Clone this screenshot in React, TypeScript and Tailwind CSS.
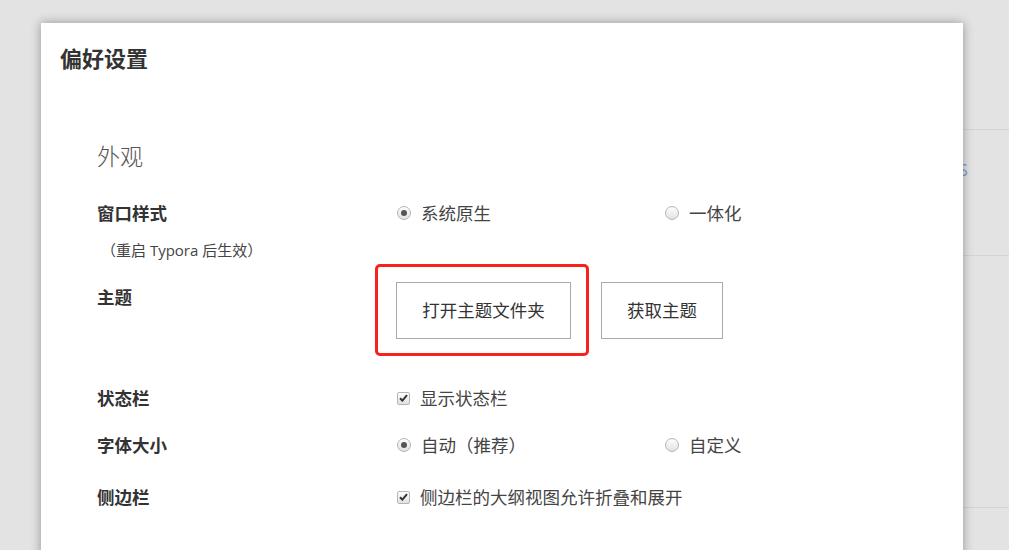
const font = { fontFamily: '"Open Sans", "Noto Sans CJK SC", sans-serif' };

const Radio = ({ checked }: { checked?: boolean }) => (
  <span className="w-[14px] h-[14px] rounded-full border border-[#b5b5b5] bg-gradient-to-b from-[#fdfdfd] to-[#e2e2e2] flex items-center justify-center shrink-0">
    {checked && <span className="w-[6px] h-[6px] rounded-full bg-[#555]" />}
  </span>
);

const Check = () => (
  <span className="w-[13px] h-[13px] rounded-[2px] border border-[#b5b5b5] bg-gradient-to-b from-[#fdfdfd] to-[#e2e2e2] flex items-center justify-center shrink-0">
    <svg width="9" height="8" viewBox="0 0 9 8">
      <path d="M1 4.2 L3.4 6.6 L8 1.2" fill="none" stroke="#333" strokeWidth="2" />
    </svg>
  </span>
);

const Option = ({ type, checked, label, w }: { type: 'radio' | 'check'; checked?: boolean; label: string; w?: string }) => (
  <label className={`flex items-center gap-[10px] ${w ?? ''}`}>
    {type === 'radio' ? <Radio checked={checked} /> : <Check />}
    <span className="text-[#444] text-[17.5px] leading-[24px]">{label}</span>
  </label>
);

const Label = ({ children }: { children: string }) => (
  <div className="w-[300px] shrink-0 text-[#333] font-bold text-[17.5px] leading-[24px]">{children}</div>
);

export default function App() {
  return (
    <div className="relative w-[1009px] h-[550px] bg-[#e3e3e3] overflow-hidden" style={font}>
      {/* background app peeking on the right */}
      <div className="absolute left-[963px] right-0 top-[129px] h-px bg-[#d4d4d4]" />
      <div className="absolute left-[963px] right-0 top-[255px] h-px bg-[#d4d4d4]" />
      <div className="absolute left-[963px] right-0 top-[507px] h-px bg-[#d4d4d4]" />
      <div className="absolute left-[959px] top-[158px] text-[16px] text-[#7b9cc4]">S</div>

      <div className="relative ml-[41px] mt-[23px] w-[922px] h-[600px] bg-white shadow-[0_0_10px_rgba(0,0,0,0.35)]">
        <div className="pl-[19px] pt-[20px] text-[22px] leading-[30px] font-bold text-[#333]">偏好设置</div>

        <div className="pl-[56px]">
          <div className="mt-[67px] text-[23px] leading-[32px] text-[#555] font-light">外观</div>

          <div className="mt-[29px] flex items-center">
            <Label>窗口样式</Label>
            <Option type="radio" checked label="系统原生" w="w-[268px]" />
            <Option type="radio" label="一体化" />
          </div>
          <div className="mt-[14px] pl-[4px] text-[15px] leading-[22px] text-[#444]">（重启 Typora 后生效）</div>

          <div className="mt-[21px] flex items-start">
            <div className="mt-[3px]">
              <Label>主题</Label>
            </div>
            <div className="relative -ml-px">
              <button className="w-[175px] h-[57px] border border-[#aaa] text-[#333] text-[17.5px] bg-white">打开主题文件夹</button>
              <div className="absolute left-[-21px] top-[-18px] w-[214px] h-[92px] border-[3px] border-[#f5231b] rounded-[5px]" />
            </div>
            <button className="ml-[30px] w-[122px] h-[57px] border border-[#aaa] text-[#333] text-[17.5px] bg-white">获取主题</button>
          </div>

          <div className="mt-[47px] flex items-center">
            <Label>状态栏</Label>
            <Option type="check" label="显示状态栏" />
          </div>

          <div className="mt-[23px] flex items-center">
            <Label>字体大小</Label>
            <Option type="radio" checked label="自动（推荐）" w="w-[268px]" />
            <Option type="radio" label="自定义" />
          </div>

          <div className="mt-[28px] flex items-center">
            <Label>侧边栏</Label>
            <Option type="check" label="侧边栏的大纲视图允许折叠和展开" />
          </div>
        </div>
      </div>
    </div>
  );
}
